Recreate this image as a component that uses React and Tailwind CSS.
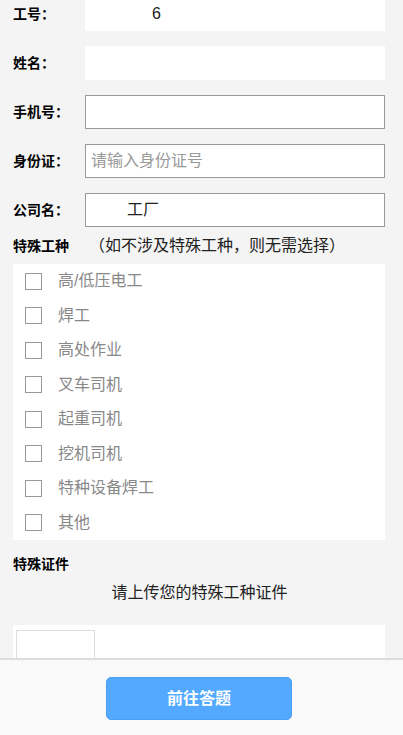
import { useState } from 'react';

var FONT = { fontFamily: '"Liberation Sans", "Noto Sans CJK SC", sans-serif' };

var TYPES = ['高/低压电工', '焊工', '高处作业', '叉车司机', '起重司机', '挖机司机', '特种设备焊工', '其他'];

function Row(props) {
  return (
    <div className="flex items-center h-[34px] mb-[15px]">
      <div className="w-[72px] text-[14px] font-bold text-black">{props.label}</div>
      <div className={'w-[300px] h-[34px] bg-white flex items-center text-[16px] ' + (props.bordered ? 'border border-[#999]' : '')}>
        {props.children}
      </div>
    </div>
  );
}

export default function App() {
  var [checked, setChecked] = useState({});

  var toggle = function (t) {
    setChecked(Object.assign({}, checked, { [t]: !checked[t] }));
  };

  return (
    <div className="min-h-[735px] bg-[#f4f4f4] overflow-hidden" style={FONT}>
      <div className="pl-[13px] -mt-[3px]">
        <Row label="工号：">
          <span className="pl-[67px] text-[#222]">6</span>
        </Row>
        <Row label="姓名："></Row>
        <Row label="手机号：" bordered></Row>
        <Row label="身份证：" bordered>
          <span className="pl-[5px] text-[#999]">请输入身份证号</span>
        </Row>
        <Row label="公司名：" bordered>
          <span className="pl-[41px] text-[#222]">工厂</span>
        </Row>
      </div>

      {/* 特殊工种 */}
      <div className="flex items-center h-[36px] -mt-[14px] pl-[13px]">
        <span className="text-[14px] font-bold text-black">特殊工种</span>
        <span className="ml-[20px] text-[16px] text-[#222]">（如不涉及特殊工种，则无需选择）</span>
      </div>
      <div className="ml-[13px] w-[372px] bg-white">
        {TYPES.map(function (t) {
          return (
            <div key={t} onClick={function () { toggle(t); }} className="flex items-center h-[34.5px] cursor-pointer">
              <span className={'ml-[12px] w-[17px] h-[17px] border border-[#999] ' + (checked[t] ? 'bg-[#52a9ff]' : 'bg-white')}></span>
              <span className="ml-[16px] text-[16px] text-[#888]">{t}</span>
            </div>
          );
        })}
      </div>

      {/* 特殊证件 */}
      <div className="pl-[13px] pt-[15px] text-[14px] font-bold text-black leading-[18px]">特殊证件</div>
      <div className="text-center text-[16px] text-[#222] mt-[9px] pr-[4px] leading-[22px]">请上传您的特殊工种证件</div>
      <div className="ml-[13px] w-[372px] h-[110px] bg-white mt-[21px] pt-[5px] pl-[3px]">
        <div className="w-[79px] h-[79px] border border-[#ddd] flex items-center justify-center text-[#bbb] text-[24px]">+</div>
      </div>

      {/* footer */}
      <div className="fixed left-0 right-0 bottom-0 h-[77px] bg-[#f9f9f9] border-t-2 border-[#dcdcdc] pt-[17px]">
        <button className="ml-[106px] w-[186px] h-[43px] rounded-[5px] bg-[#52a9ff] border border-[#4a9ff0] text-white text-[16px] font-bold">
          前往答题
        </button>
      </div>
    </div>
  );
}
